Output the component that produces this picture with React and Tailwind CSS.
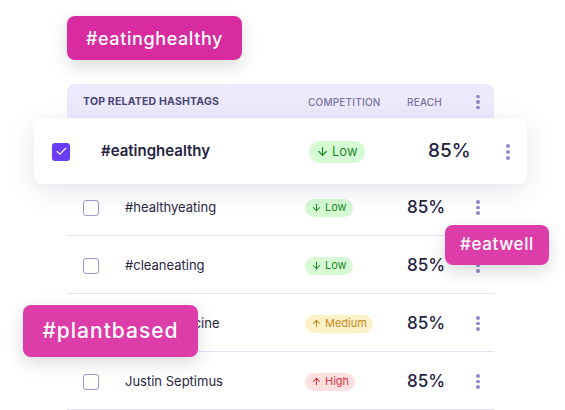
import React from "react";
import { ArrowDown, ArrowUp, Check } from "lucide-react";

function Dots({ big }) {
  const d = big ? "w-[4px] h-[4px]" : "w-[3.5px] h-[3.5px]";
  return (
    <div className={`flex flex-col items-center ${big ? "gap-[2px]" : "gap-[1.8px]"}`}>
      <span className={`${d} rounded-full bg-[#8f88c6]`} />
      <span className={`${d} rounded-full bg-[#8f88c6]`} />
      <span className={`${d} rounded-full bg-[#8f88c6]`} />
    </div>
  );
}

function Pill({ level, big }) {
  const styles = {
    Low: "bg-[#d6fad4] text-[#1f8a2c]",
    Medium: "bg-[#fdf1c8] text-[#c4881c]",
    High: "bg-[#fde1e1] text-[#e3343c]",
  };
  const Icon = level === "Low" ? ArrowDown : ArrowUp;
  return (
    <span
      className={`inline-flex items-center rounded-full ${styles[level]} ${
        big ? "h-[22px] px-[7px] gap-[3px] text-[13px]" : "h-[18px] px-[6px] gap-[3px] text-[11px]"
      }`}
    >
      <Icon size={big ? 13 : 11} strokeWidth={2.2} />
      <span>{level}</span>
    </span>
  );
}

function Row({ name, level }) {
  return (
    <div className="h-[58px] flex items-center border-b border-[#e4e1f5] pl-[16px] pt-[2px]">
      <span className="w-[16px] h-[16px] rounded-[3px] border-[1.5px] border-[#9f97d3] bg-white" />
      <span className="ml-[26px] w-[180px] text-[13px] text-[#2a2744]">{name}</span>
      <span className="w-[102px] flex">
        <Pill level={level} />
      </span>
      <span className="w-[67px] text-[17px] font-medium text-[#26233f]">85%</span>
      <span className="w-[8px] flex justify-center">
        <Dots />
      </span>
    </div>
  );
}

export default function App() {
  return (
    <div
      className="relative w-[565px] h-[410px] bg-white overflow-hidden"
      style={{ fontFamily: "Inter, 'Noto Sans', sans-serif" }}
    >
      <div className="pl-[67px] pt-[84px]">
        <div className="w-[427px]">
          <div className="h-[34px] bg-[#edeafd] rounded-t-lg flex items-center pl-[16px] pt-[2px] text-[10px] tracking-[0.2px]">
            <span className="w-[225px] text-[10.5px] font-bold text-[#4a4574]">TOP RELATED HASHTAGS</span>
            <span className="w-[99px] font-medium text-[#7a739e]">COMPETITION</span>
            <span className="w-[67px] font-medium text-[#7a739e]">REACH</span>
            <span className="w-[8px] flex justify-center">
              <Dots />
            </span>
          </div>
          <div className="h-[60px]" />
          <Row name="#healthyeating" level="Low" />
          <Row name="#cleaneating" level="Low" />
          <Row name="#plantmedicine" level="Medium" />
          <Row name="Justin Septimus" level="High" />
        </div>
      </div>

      <div className="absolute left-[34px] top-[119px] w-[493px] h-[65px] rounded-lg bg-white shadow-[0_6px_28px_rgba(40,30,80,0.12)] flex items-center pl-[18px]">
        <span className="w-[18px] h-[18px] rounded-[3px] bg-[#6a3df2] flex items-center justify-center">
          <Check size={13} strokeWidth={2} color="white" />
        </span>
        <span className="ml-[31px] w-[208px] text-[15px] font-semibold text-[#26233f]">#eatinghealthy</span>
        <span className="w-[119px] flex">
          <Pill level="Low" big />
        </span>
        <span className="w-[76px] text-[19px] font-medium text-[#26233f]">85%</span>
        <span className="w-[8px] flex justify-center">
          <Dots big />
        </span>
      </div>

      <div className="absolute left-[67px] top-[16px] w-[175px] h-[44px] rounded-lg bg-[#d82ba0] shadow-[0_6px_18px_rgba(0,0,0,0.15)] flex items-center justify-center text-white text-[18px] font-medium tracking-[0.6px]">
        #eatinghealthy
      </div>
      <div className="absolute left-[445px] top-[225px] w-[104px] h-[40px] rounded-lg bg-[#dc3da9] shadow-[0_6px_18px_rgba(0,0,0,0.15)] flex items-center justify-center text-white text-[17px] font-medium tracking-[0.6px]">
        #eatwell
      </div>
      <div className="absolute left-[23px] top-[305px] w-[175px] h-[52px] rounded-lg bg-[#dc3da9] shadow-[0_6px_18px_rgba(0,0,0,0.15)] flex items-center justify-center text-white text-[21px] font-medium tracking-[1px]">
        #plantbased
      </div>
    </div>
  );
}
